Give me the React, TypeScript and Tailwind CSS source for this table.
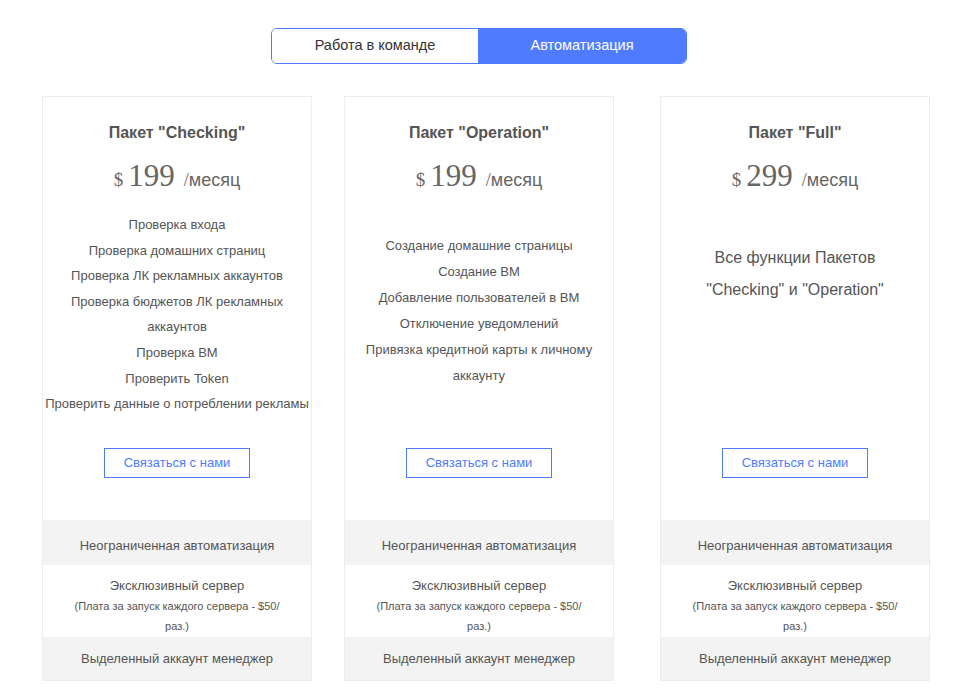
import React from 'react';

const plans = [
  {
    name: 'Пакет "Checking"',
    price: '199',
    featuresClass: 'pt-[19px] px-0 text-[13px] leading-[25.6px]',
    features: [
      'Проверка входа',
      'Проверка домашних страниц',
      'Проверка ЛК рекламных аккаунтов',
      'Проверка бюджетов ЛК рекламных аккаунтов',
      'Проверка BM',
      'Проверить Token',
      'Проверить данные о потреблении рекламы',
    ],
    cardClass: 'ml-[42px]',
  },
  {
    name: 'Пакет "Operation"',
    price: '199',
    featuresClass: 'pt-[40px] px-[4px] text-[13px] leading-[26px]',
    features: [
      'Создание домашние страницы',
      'Создание BM',
      'Добавление пользователей в BM',
      'Отключение уведомлений',
      'Привязка кредитной карты к личному аккаунту',
    ],
    cardClass: 'ml-[32px]',
  },
  {
    name: 'Пакет "Full"',
    price: '299',
    featuresClass: 'pt-[49px] px-[40px] text-[16px] leading-[32px]',
    features: ['Все функции Пакетов "Checking" и "Operation"'],
    cardClass: 'ml-[46px]',
  },
];

const PlanCard: React.FC<{ plan: (typeof plans)[number] }> = ({ plan }) => (
  <div className={`w-[270px] shrink-0 border border-[#ededed] bg-white ${plan.cardClass}`}>
    <div className="h-[423px] flex flex-col items-center">
      <h3 className="pt-[24px] text-[16px] leading-[24px] font-bold text-[#555]">{plan.name}</h3>
      <div className="mt-[8px] h-[40px] flex items-baseline text-[#666]">
        <span className="font-['Liberation_Serif',serif] text-[19px]">$</span>
        <span className="ml-[5px] font-['Liberation_Serif',serif] text-[31px]">{plan.price}</span>
        <span className="ml-[9px] font-['Liberation_Serif',serif] text-[18px]">/</span>
        <span className="text-[18px]">месяц</span>
      </div>
      <ul className={`w-full text-center text-[#555] ${plan.featuresClass}`}>
        {plan.features.map((f) => (
          <li key={f}>{f}</li>
        ))}
      </ul>
      <button className="mt-auto mb-[42px] w-[146px] h-[30px] border border-[#4f7cff] text-[13px] text-[#4f7cff]">
        Связаться с нами
      </button>
    </div>
    <div className="h-[45px] pt-[16px] bg-[#f3f3f3] text-center text-[13px] leading-[20px] text-[#555]">
      Неограниченная автоматизация
    </div>
    <div className="h-[72px] pt-[11px] text-center text-[#555]">
      <div className="text-[13px] leading-[20px]">Эксклюзивный сервер</div>
      <div className="px-[30px] text-[11px] leading-[20px]">(Плата за запуск каждого сервера - $50/ раз.)</div>
    </div>
    <div className="h-[43px] pt-[12px] bg-[#f3f3f3] text-center text-[13px] leading-[20px] text-[#555]">
      Выделенный аккаунт менеджер
    </div>
  </div>
);

export default function App() {
  return (
    <div className="w-[958px] h-[692px] overflow-hidden bg-white font-['Liberation_Sans',Arial,sans-serif]">
      <div className="pt-[28px] flex justify-center">
        <div className="w-[416px] h-[36px] flex border border-[#4f7cff] rounded-[6px] overflow-hidden text-[14.5px]">
          <button className="w-[206px] bg-white text-[#333]">Работа в команде</button>
          <button className="flex-1 bg-[#4f7cff] text-white">Автоматизация</button>
        </div>
      </div>
      <div className="mt-[32px] flex">
        {plans.map((p) => (
          <PlanCard key={p.name} plan={p} />
        ))}
      </div>
    </div>
  );
}
